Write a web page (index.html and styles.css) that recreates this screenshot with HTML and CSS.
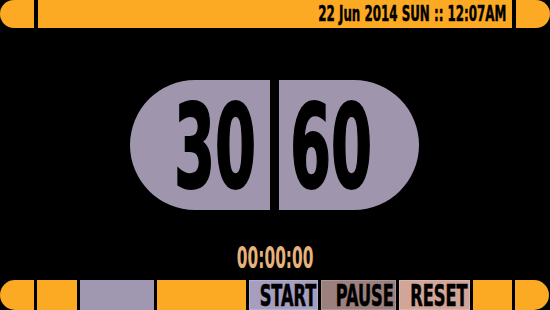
FILE: index.html
```html
<!DOCTYPE html>
<html>
<head>
<meta charset="utf-8">
<link rel="stylesheet" href="styles.css">
</head>
<body>
<div class="screen">
  <header class="topbar">
    <div class="cap cap-left"></div>
    <div class="topbar-main"><span class="clock">22 Jun 2014 SUN :: 12:07AM</span></div>
    <div class="cap cap-right"></div>
  </header>
  <main class="stage">
    <div class="pill">
      <div class="half half-left"><span class="digits">30</span></div>
      <div class="half half-right"><span class="digits">60</span></div>
    </div>
    <div class="timer"><span class="timer-text">00:00:00</span></div>
  </main>
  <footer class="bottombar">
    <div class="cap cap-left"></div>
    <div class="seg seg-a"></div>
    <div class="seg seg-b"></div>
    <div class="seg seg-c"></div>
    <div class="btn btn-start"><span class="btn-text">START</span></div>
    <div class="btn btn-pause"><span class="btn-text">PAUSE</span></div>
    <div class="btn btn-reset"><span class="btn-text">RESET</span></div>
    <div class="seg seg-d"></div>
    <div class="cap cap-right"></div>
  </footer>
</div>
</body>
</html>
```
FILE: styles.css
```css
* { box-sizing: border-box; }
html, body {
  margin: 0;
  padding: 0;
  background: #000;
}
.screen {
  width: 550px;
  height: 310px;
  display: flex;
  flex-direction: column;
  background: #000;
  font-family: "DejaVu Sans Condensed", "DejaVu Sans", sans-serif;
  font-weight: bold;
  color: #000;
  overflow: hidden;
}
.topbar {
  height: 28px;
  display: flex;
  gap: 4px;
  flex: none;
}
.cap {
  width: 34px;
  background: #fca924;
}
.cap-left { border-radius: 15px 0 0 15px; }
.cap-right { border-radius: 0 15px 15px 0; }
.topbar-main {
  flex: 1;
  background: #fca924;
  display: flex;
  justify-content: flex-end;
  align-items: center;
  padding-right: 6px;
}
.clock {
  display: inline-block;
  font-size: 22px;
  line-height: 28px;
  white-space: nowrap;
  transform: scaleX(0.6);
  transform-origin: right center;
  -webkit-text-stroke: 0.5px #000;
}
.stage {
  flex: 1;
  display: flex;
  flex-direction: column;
  align-items: center;
  padding-top: 52px;
}
.pill {
  display: flex;
  gap: 9px;
  height: 130px;
  margin-left: -1px;
}
.half {
  width: 140px;
  background: #9f96ae;
  display: flex;
  align-items: center;
}
.half-left {
  border-radius: 65px 0 0 65px;
  justify-content: flex-end;
  padding-right: 14px;
}
.half-right {
  border-radius: 0 65px 65px 0;
  justify-content: flex-start;
  padding-left: 11px;
}
.digits {
  display: inline-block;
  font-size: 115px;
  line-height: 1;
  transform: translateY(2px) scaleX(0.57);
  -webkit-text-stroke: 2px #000;
}
.half-left .digits {
  transform-origin: right center;
  margin-left: -80px;
}
.half-right .digits {
  transform-origin: left center;
  margin-right: -80px;
}
.timer {
  margin-top: 34px;
  height: 28px;
  display: flex;
  justify-content: center;
  align-items: center;
}
.timer-text {
  display: inline-block;
  font-size: 30px;
  line-height: 1;
  color: #e6b27d;
  transform: scaleX(0.57);
  margin: 0 -40px;
}
.bottombar {
  height: 30px;
  display: flex;
  gap: 3px;
  flex: none;
}
.seg { background: #fca924; }
.seg-a { width: 40px; }
.seg-b { width: 74px; background: #a097b0; }
.seg-c { width: 89px; }
.seg-d { width: 39px; }
.btn {
  display: flex;
  justify-content: flex-end;
  align-items: center;
  padding-right: 1px;
  border: 1px solid rgba(255,255,255,0.18);
}
.btn-start { width: 69px; background: #a59ebe; }
.btn-pause { width: 75px; background: #9c807d; }
.btn-reset { width: 71px; background: #d1a699; }
.btn-text {
  display: inline-block;
  font-size: 30px;
  line-height: 28px;
  white-space: nowrap;
  transform: translateY(1px) scaleX(0.6);
  transform-origin: right center;
  margin-left: -50px;
  -webkit-text-stroke: 0.6px #000;
}
```
